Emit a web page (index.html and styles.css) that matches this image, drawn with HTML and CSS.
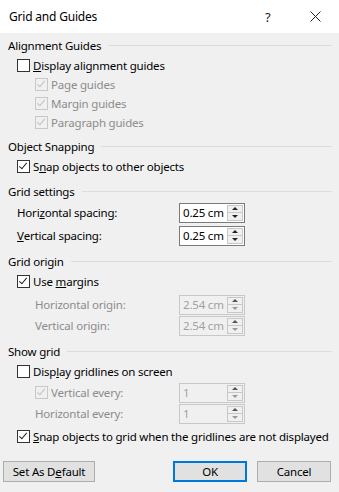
FILE: index.html
```html
<!DOCTYPE html>
<html lang="en">
<head>
  <meta charset="UTF-8" />
  <title>Grid and Guides</title>
  <link rel="stylesheet" href="styles.css">
</head>
<body>
  <div class="dialog">
    <!-- Title bar -->
    <div class="titlebar">
      <span class="title">Grid and Guides</span>
      <span class="help">?</span>
      <span class="close">
        <svg width="11" height="11" viewBox="0 0 11 11"><path d="M0.5 0.5 L10.5 10.5 M10.5 0.5 L0.5 10.5" stroke="#222" stroke-width="1"/></svg>
      </span>
    </div>

    <div class="content">
      <!-- Alignment Guides -->
      <div class="group-title">Alignment Guides</div>
      <div class="row check-row">
        <span class="box"></span><span><u>D</u>isplay alignment guides</span>
      </div>
      <div class="row sub disabled">
        <span class="box checked"></span><span>Page guides</span>
      </div>
      <div class="row sub disabled">
        <span class="box checked"></span><span>Margin guides</span>
      </div>
      <div class="row sub disabled">
        <span class="box checked"></span><span>Paragraph guides</span>
      </div>

      <!-- Object Snapping -->
      <div class="group-title">Object Snapping</div>
      <div class="row check-row">
        <span class="box checked"></span><span>S<u>n</u>ap objects to other objects</span>
      </div>

      <!-- Grid settings -->
      <div class="group-title loose">Grid settings</div>
      <div class="row field-row wide">
        <span class="label">Hori<u>z</u>ontal spacing:</span>
        <div class="spin"><span class="value">0.25 cm</span><span class="arrows"><i class="up"></i><i class="down"></i></span></div>
      </div>
      <div class="row field-row wide">
        <span class="label"><u>V</u>ertical spacing:</span>
        <div class="spin"><span class="value">0.25 cm</span><span class="arrows"><i class="up"></i><i class="down"></i></span></div>
      </div>

      <!-- Grid origin -->
      <div class="group-title">Grid origin</div>
      <div class="row check-row">
        <span class="box checked"></span><span>Use <u>m</u>argins</span>
      </div>
      <div class="row field-row sub-field disabled gap3">
        <span class="label">Horizontal origin:</span>
        <div class="spin"><span class="value">2.54 cm</span><span class="arrows"><i class="up"></i><i class="down"></i></span></div>
      </div>
      <div class="row field-row sub-field disabled">
        <span class="label">Vertical origin:</span>
        <div class="spin"><span class="value">2.54 cm</span><span class="arrows"><i class="up"></i><i class="down"></i></span></div>
      </div>

      <!-- Show grid -->
      <div class="group-title spaced">Show grid</div>
      <div class="row check-row">
        <span class="box"></span><span>Disp<u>l</u>ay gridlines on screen</span>
      </div>
      <div class="row field-row sub-check disabled gap1">
        <span class="label"><span class="box checked"></span>Vertical every:</span>
        <div class="spin"><span class="value">1</span><span class="arrows"><i class="up"></i><i class="down"></i></span></div>
      </div>
      <div class="row field-row sub-field disabled">
        <span class="label">Horizontal every:</span>
        <div class="spin"><span class="value">1</span><span class="arrows"><i class="up"></i><i class="down"></i></span></div>
      </div>
      <div class="row check-row last">
        <span class="box checked"></span><span><u>S</u>nap objects to grid when the gridlines are not displayed</span>
      </div>
    </div>

    <!-- Buttons -->
    <div class="buttons">
      <button class="btn default-btn">Set As D<u>e</u>fault</button>
      <button class="btn ok">OK</button>
      <button class="btn">Cancel</button>
    </div>
  </div>
</body>
</html>
```

FILE: styles.css
```css
body {
  margin: 0;
  font-family: 'Noto Sans', sans-serif;
  font-size: 11.5px;
  letter-spacing: -0.2px;
  color: #000;
  background: #f0f0f0;
}
u {
  text-decoration: underline;
  text-underline-offset: 1px;
}
.dialog {
  width: 339px;
  height: 492px;
  background: #f0f0f0;
  overflow: hidden;
}
.titlebar {
  height: 33px;
  background: #fff;
  display: flex;
  align-items: center;
  padding-left: 9px;
}
.title {
  flex: 1;
  font-size: 12px;
}
.help {
  width: 14px;
  margin-right: 31px;
  font-size: 13px;
  color: #222;
}
.close {
  width: 11px;
  margin-right: 18px;
  display: flex;
}
.content {
  padding: 2px 7px 0 8px;
}
.group-title {
  height: 20px;
  display: flex;
  align-items: center;
  margin-top: 4px;
}
.group-title:first-child {
  margin-top: 0;
}
.group-title.loose {
  margin-top: 5px;
}
.group-title.spaced {
  margin-top: 5px;
}
.group-title::after {
  content: '';
  flex: 1;
  height: 1px;
  background: #dcdcdc;
  margin-left: 7px;
  margin-top: 1px;
}
.row {
  display: flex;
  align-items: center;
  height: 19px;
  white-space: nowrap;
}
.gap1 {
  margin-top: 1px;
}
.gap3 {
  margin-top: 3px;
}
.check-row {
  height: 20px;
  padding-left: 9px;
}
.check-row.last {
  height: 24px;
}
.sub {
  padding-left: 27px;
}
.box {
  width: 11px;
  height: 11px;
  border: 1px solid #333;
  background: #fff;
  margin-right: 3px;
  position: relative;
  flex: none;
}
.box.checked::after {
  content: '';
  position: absolute;
  left: 3px;
  top: 0;
  width: 3px;
  height: 7px;
  border-right: 1px solid #222;
  border-bottom: 1px solid #222;
  transform: rotate(40deg);
}
.disabled {
  color: #8c8c8c;
}
.disabled .box {
  border-color: #c8c8c8;
  background: #f0f0f0;
}
.disabled .box.checked::after {
  border-color: #c0c0c0;
}
.field-row {
  height: 21px;
  padding-left: 9px;
}
.field-row.wide {
  height: 23px;
}
.sub-field,
.sub-check {
  padding-left: 27px;
}
.label {
  width: 161px;
  display: flex;
  align-items: center;
}
.sub-field .label,
.sub-check .label {
  width: 143px;
}
.spin {
  display: flex;
  width: 64px;
  height: 18px;
  border: 1px solid #7a7a7a;
  background: #fff;
  margin-left: 1px;
}
.disabled .spin {
  border-color: #c8c8c8;
  background: #f0f0f0;
  color: #a0a0a0;
}
.value {
  flex: 1;
  padding-left: 3px;
  line-height: 18px;
}
.arrows {
  width: 14px;
  margin: 1px 1px 1px 0;
  border: 1px solid #c8c8c8;
  background: #f0f0f0;
  display: flex;
  flex-direction: column;
}
.arrows i {
  flex: 1;
  display: flex;
  align-items: center;
  justify-content: center;
}
.arrows .up {
  border-bottom: 1px solid #c8c8c8;
}
.arrows .up::before {
  content: '';
  border-left: 3px solid transparent;
  border-right: 3px solid transparent;
  border-bottom: 3px solid #222;
}
.arrows .down::before {
  content: '';
  border-left: 3px solid transparent;
  border-right: 3px solid transparent;
  border-top: 3px solid #222;
}
.disabled .arrows .down::before {
  border-top-color: #9a9a9a;
}
.disabled .arrows .up::before {
  border-bottom-color: #555;
}
.buttons {
  display: flex;
  margin-top: 13px;
  padding-left: 3px;
}
.btn {
  font-family: 'Noto Sans', sans-serif;
  font-size: 11.5px;
  letter-spacing: -0.2px;
  height: 21px;
  width: 74px;
  padding: 0;
  background: #e1e1e1;
  border: 1px solid #adadad;
  color: #000;
}
.default-btn {
  width: 92px;
  margin-right: 78px;
}
.ok {
  border: 2px solid #0078d7;
  margin-right: 10px;
}
```
